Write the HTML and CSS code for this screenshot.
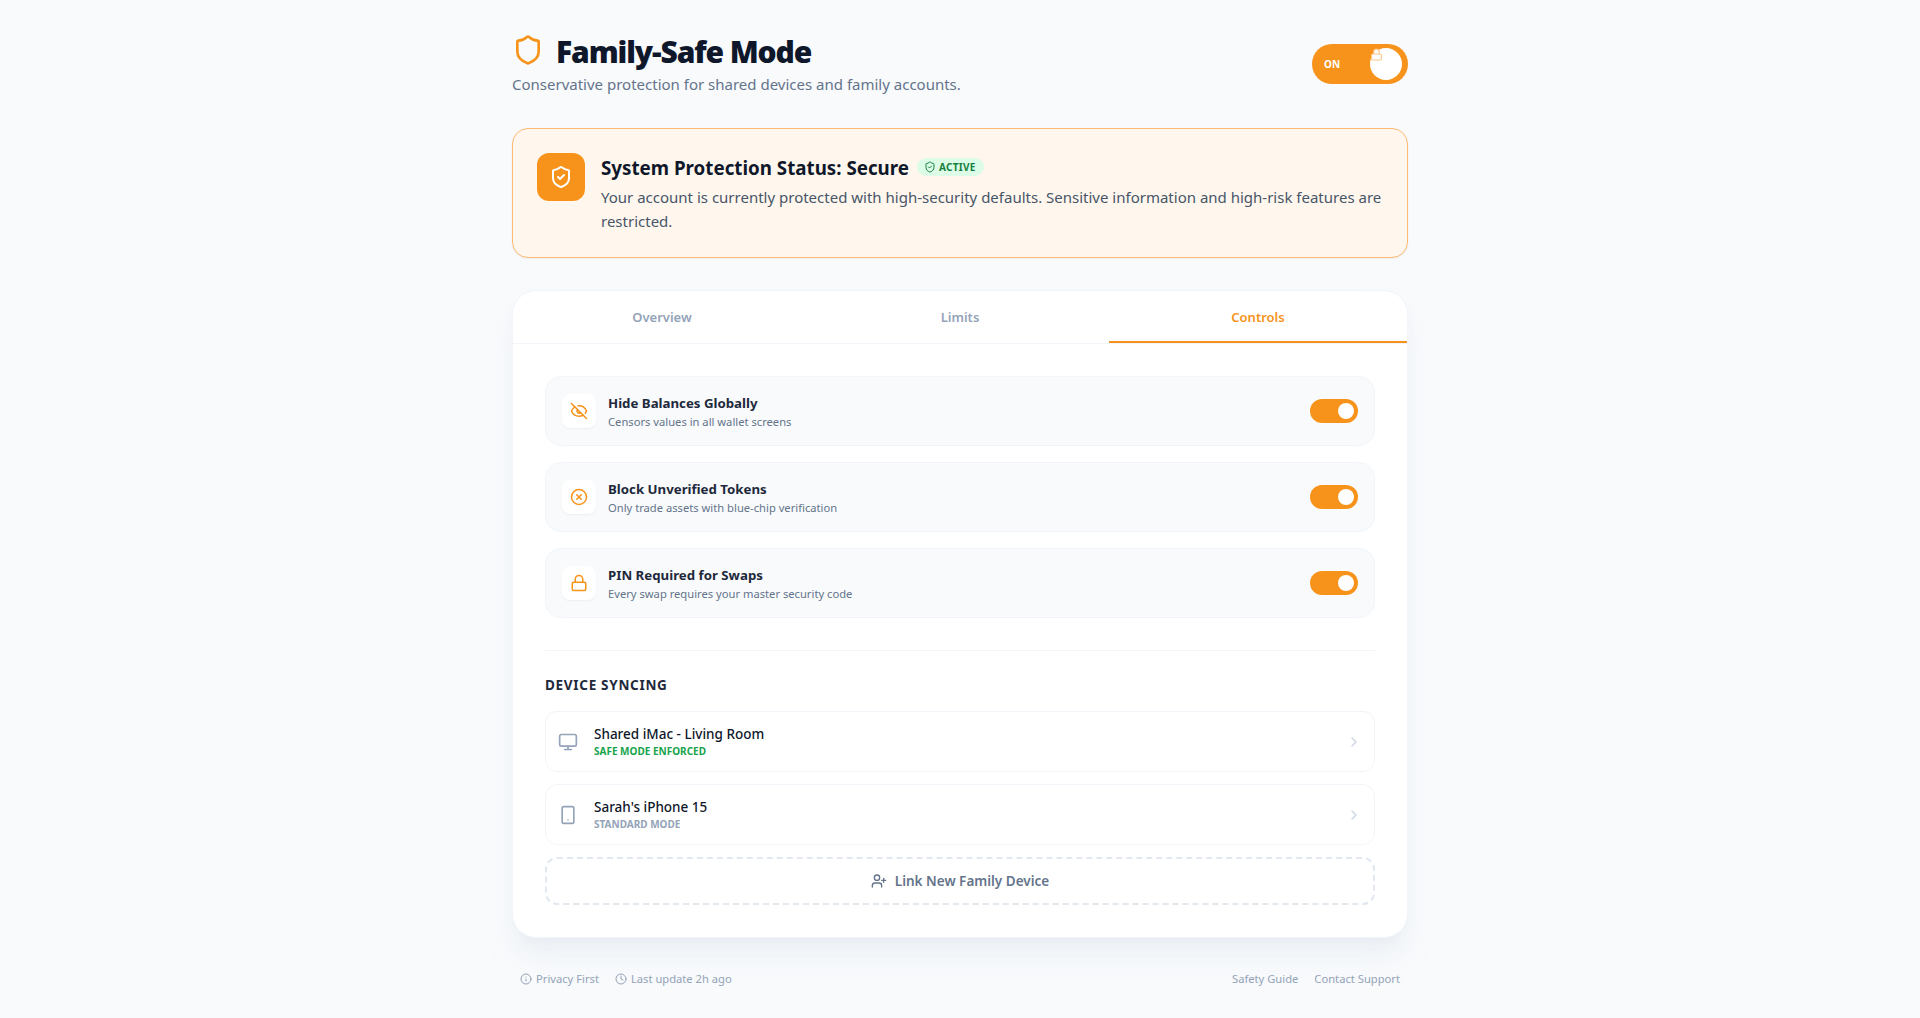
FILE: index.html
```html
<!DOCTYPE html>
<html lang="en">
<head>
    <meta charset="UTF-8">
    <meta name="viewport" content="width=device-width, initial-scale=1.0">
    <title>Family-Safe Mode</title>
    <link rel="stylesheet" href="styles.css">
</head>
<body>
    <div class="page">
        <header class="page-header">
            <div>
                <div class="title-row">
                    <svg class="title-icon" viewBox="0 0 24 24"><path d="M20 13c0 5-3.5 7.5-7.66 8.95a1 1 0 0 1-.67-.01C7.5 20.5 4 18 4 13V6a1 1 0 0 1 1-1c2 0 4.5-1.2 6.24-2.72a1.17 1.17 0 0 1 1.52 0C14.51 3.81 17 5 19 5a1 1 0 0 1 1 1z"/></svg>
                    <h1>Family-Safe Mode</h1>
                </div>
                <p class="subtitle">Conservative protection for shared devices and family accounts.</p>
            </div>
            <div class="master-toggle">
                <span>ON</span>
                <div class="master-knob">
                    <svg class="knob-lock" viewBox="0 0 24 24"><path d="M7 11V7a5 5 0 0 1 10 0v4"/><rect x="3" y="11" width="18" height="11" rx="2"/></svg>
                </div>
            </div>
        </header>

        <section class="status-card">
            <div class="status-icon">
                <svg viewBox="0 0 24 24"><path d="M20 13c0 5-3.5 7.5-7.66 8.95a1 1 0 0 1-.67-.01C7.5 20.5 4 18 4 13V6a1 1 0 0 1 1-1c2 0 4.5-1.2 6.24-2.72a1.17 1.17 0 0 1 1.52 0C14.51 3.81 17 5 19 5a1 1 0 0 1 1 1z"/><path d="m9 12 2 2 4-4"/></svg>
            </div>
            <div>
                <div class="status-head">
                    <h2>System Protection Status: Secure</h2>
                    <span class="badge">
                        <svg viewBox="0 0 24 24"><path d="M20 13c0 5-3.5 7.5-7.66 8.95a1 1 0 0 1-.67-.01C7.5 20.5 4 18 4 13V6a1 1 0 0 1 1-1c2 0 4.5-1.2 6.24-2.72a1.17 1.17 0 0 1 1.52 0C14.51 3.81 17 5 19 5a1 1 0 0 1 1 1z"/><path d="m9 12 2 2 4-4"/></svg>
                        ACTIVE
                    </span>
                </div>
                <p>Your account is currently protected with high-security defaults. Sensitive information and high-risk features are restricted.</p>
            </div>
        </section>

        <section class="panel">
            <nav class="tabs">
                <div class="tab">Overview</div>
                <div class="tab">Limits</div>
                <div class="tab active">Controls</div>
            </nav>

            <div class="panel-body">
                <div class="control-list">
                    <div class="control-row">
                        <div class="control-icon">
                            <svg viewBox="0 0 24 24"><path d="M10.73 5.08A10.4 10.4 0 0 1 12 5c4.5 0 8.3 2.7 10 7a11 11 0 0 1-1.65 2.9"/><path d="M6.6 6.6A11 11 0 0 0 2 12c1.7 4.3 5.5 7 10 7a10.4 10.4 0 0 0 5.4-1.6"/><path d="M9.9 9.9a3 3 0 0 0 4.2 4.2"/><path d="m2 2 20 20"/></svg>
                        </div>
                        <div class="control-text">
                            <h3>Hide Balances Globally</h3>
                            <p>Censors values in all wallet screens</p>
                        </div>
                        <div class="toggle"><div class="knob"></div></div>
                    </div>
                    <div class="control-row">
                        <div class="control-icon">
                            <svg viewBox="0 0 24 24"><circle cx="12" cy="12" r="10"/><path d="m15 9-6 6"/><path d="m9 9 6 6"/></svg>
                        </div>
                        <div class="control-text">
                            <h3>Block Unverified Tokens</h3>
                            <p>Only trade assets with blue-chip verification</p>
                        </div>
                        <div class="toggle"><div class="knob"></div></div>
                    </div>
                    <div class="control-row">
                        <div class="control-icon">
                            <svg viewBox="0 0 24 24"><rect x="3" y="11" width="18" height="11" rx="2"/><path d="M7 11V7a5 5 0 0 1 10 0v4"/></svg>
                        </div>
                        <div class="control-text">
                            <h3>PIN Required for Swaps</h3>
                            <p>Every swap requires your master security code</p>
                        </div>
                        <div class="toggle"><div class="knob"></div></div>
                    </div>
                </div>

                <div class="device-section">
                    <h4>DEVICE SYNCING</h4>
                    <div class="device-list">
                        <div class="device-row">
                            <svg class="device-icon" viewBox="0 0 24 24"><rect x="2" y="3" width="20" height="14" rx="2"/><path d="M8 21h8"/><path d="M12 17v4"/></svg>
                            <div class="device-text">
                                <div class="device-name">Shared iMac - Living Room</div>
                                <div class="device-mode safe">SAFE MODE ENFORCED</div>
                            </div>
                            <svg class="chevron" viewBox="0 0 24 24"><path d="m9 18 6-6-6-6"/></svg>
                        </div>
                        <div class="device-row">
                            <svg class="device-icon" viewBox="0 0 24 24"><rect x="5" y="2" width="14" height="20" rx="2"/><path d="M12 18h.01"/></svg>
                            <div class="device-text">
                                <div class="device-name">Sarah's iPhone 15</div>
                                <div class="device-mode">STANDARD MODE</div>
                            </div>
                            <svg class="chevron" viewBox="0 0 24 24"><path d="m9 18 6-6-6-6"/></svg>
                        </div>
                        <button class="link-device">
                            <svg viewBox="0 0 24 24"><path d="M16 21v-2a4 4 0 0 0-4-4H6a4 4 0 0 0-4 4v2"/><circle cx="9" cy="7" r="4"/><path d="M19 8v6"/><path d="M22 11h-6"/></svg>
                            Link New Family Device
                        </button>
                    </div>
                </div>
            </div>
        </section>

        <footer class="page-footer">
            <div class="footer-group">
                <span class="footer-item">
                    <svg viewBox="0 0 24 24"><circle cx="12" cy="12" r="10"/><path d="M12 16v-4"/><path d="M12 8h.01"/></svg>
                    Privacy First
                </span>
                <span class="footer-item">
                    <svg viewBox="0 0 24 24"><circle cx="12" cy="12" r="10"/><path d="M12 6v6l4 2"/></svg>
                    Last update 2h ago
                </span>
            </div>
            <div class="footer-group">
                <a href="#">Safety Guide</a>
                <a href="#">Contact Support</a>
            </div>
        </footer>
    </div>
</body>
</html>
```

FILE: styles.css
```css
* {
    box-sizing: border-box;
}

body {
    font-family: "Noto Sans", sans-serif;
    background-color: #f8fafc;
    color: #0f172a;
    margin: 0;
    padding: 0;
}

svg {
    fill: none;
    stroke: currentColor;
    stroke-width: 2;
    stroke-linecap: round;
    stroke-linejoin: round;
    flex-shrink: 0;
}

h1, h2, h3, h4, p {
    margin: 0;
}

.page {
    width: 896px;
    margin: 0 auto;
    padding-top: 32px;
}

.page-header {
    display: flex;
    justify-content: space-between;
    align-items: center;
    margin-bottom: 32px;
}

.title-row {
    display: flex;
    align-items: center;
    gap: 12px;
    height: 36px;
}

.title-icon {
    width: 32px;
    height: 32px;
    color: #f7931a;
}

h1 {
    font-size: 30px;
    line-height: 36px;
    font-weight: 900;
    letter-spacing: -1.1px;
    margin-top: 4px;
}

.subtitle {
    font-size: 15px;
    line-height: 24px;
    color: #64748b;
    margin-top: 4px;
}

.master-toggle {
    position: relative;
    width: 96px;
    height: 40px;
    border-radius: 20px;
    background-color: #f7931a;
    color: white;
    font-size: 10px;
    font-weight: 700;
    display: flex;
    align-items: center;
    padding-left: 12px;
}

.master-knob {
    position: absolute;
    top: 4px;
    right: 6px;
    width: 32px;
    height: 32px;
    border-radius: 50%;
    background-color: white;
}

.knob-lock {
    position: absolute;
    top: 0;
    left: 0;
    width: 13px;
    height: 13px;
    color: #fbc88a;
    fill: white;
}

.status-card {
    display: flex;
    gap: 16px;
    padding: 24px;
    background-color: #fff7ed;
    border: 1px solid #fdba74;
    border-radius: 16px;
    box-shadow: 0 1px 2px rgba(0,0,0,0.05);
    margin-bottom: 32px;
}

.status-icon {
    width: 48px;
    height: 48px;
    border-radius: 12px;
    background-color: #f7931a;
    color: white;
    display: flex;
    align-items: center;
    justify-content: center;
    flex-shrink: 0;
}

.status-icon svg {
    width: 24px;
    height: 24px;
}

.status-head {
    display: flex;
    align-items: center;
    gap: 8px;
    margin-bottom: 4px;
}

.status-head h2 {
    font-size: 18.75px;
    line-height: 26px;
    padding-top: 2px;
    font-weight: 700;
}

.badge {
    display: flex;
    align-items: center;
    gap: 3px;
    padding: 2px 8px 2px 7px;
    border-radius: 9px;
    background-color: #dcfce7;
    color: #15803d;
    font-size: 10px;
    font-weight: 700;
    letter-spacing: 0.3px;
}

.badge svg {
    width: 12px;
    height: 12px;
}

.status-card p {
    font-size: 15px;
    line-height: 24px;
    color: #475569;
}

.panel {
    background-color: white;
    border: 1px solid #f1f5f9;
    border-radius: 24px;
    box-shadow: 0 20px 25px -5px rgba(226,232,240,0.5), 0 8px 10px -6px rgba(226,232,240,0.5);
    overflow: hidden;
}

.tabs {
    display: flex;
    border-bottom: 1px solid #f1f5f9;
}

.tab {
    flex: 1;
    text-align: center;
    padding: 17px 0 15px;
    font-size: 13px;
    line-height: 18px;
    font-weight: 600;
    color: #94a3b8;
    border-bottom: 2px solid transparent;
}

.tab.active {
    color: #f7931a;
    border-bottom-color: #f7931a;
}

.panel-body {
    padding: 32px;
}

.control-list {
    display: flex;
    flex-direction: column;
    gap: 16px;
}

.control-row {
    display: flex;
    align-items: center;
    gap: 12px;
    padding: 16px;
    background-color: #f8fafc;
    border: 1px solid #f1f5f9;
    border-radius: 16px;
}

.control-icon {
    width: 34px;
    height: 34px;
    border-radius: 8px;
    background-color: white;
    box-shadow: 0 1px 2px rgba(0,0,0,0.05);
    color: #f7931a;
    display: flex;
    align-items: center;
    justify-content: center;
}

.control-icon svg {
    width: 18px;
    height: 18px;
}

.control-text {
    flex: 1;
}

.control-text h3 {
    font-size: 13.25px;
    line-height: 20px;
    font-weight: 700;
    color: #1e293b;
}

.control-text p {
    font-size: 11.2px;
    line-height: 15px;
    margin-top: 1px;
    color: #64748b;
}

.toggle {
    position: relative;
    width: 48px;
    height: 24px;
    border-radius: 12px;
    background-color: #f7931a;
}

.knob {
    position: absolute;
    top: 4px;
    right: 4px;
    width: 16px;
    height: 16px;
    border-radius: 50%;
    background-color: white;
}

.device-section {
    margin-top: 32px;
    padding-top: 24px;
    border-top: 1px solid #f1f5f9;
}

.device-section h4 {
    font-size: 13.5px;
    line-height: 20px;
    font-weight: 700;
    letter-spacing: 0.7px;
    color: #1e293b;
    margin-bottom: 16px;
}

.device-list {
    display: flex;
    flex-direction: column;
    gap: 12px;
}

.device-row {
    display: flex;
    align-items: center;
    gap: 16px;
    padding: 12px;
    border: 1px solid #f1f5f9;
    border-radius: 12px;
}

.device-icon {
    width: 20px;
    height: 20px;
    color: #94a3b8;
}

.device-text {
    flex: 1;
}

.device-name {
    font-size: 13.5px;
    line-height: 20px;
    font-weight: 500;
}

.device-mode {
    font-size: 10px;
    line-height: 15px;
    font-weight: 700;
    color: #94a3b8;
}

.device-mode.safe {
    color: #16a34a;
}

.chevron {
    width: 16px;
    height: 16px;
    color: #cbd5e1;
}

.link-device {
    display: flex;
    align-items: center;
    justify-content: center;
    gap: 8px;
    height: 48px;
    background: none;
    border: 2px dashed #e2e8f0;
    border-radius: 12px;
    font-family: inherit;
    font-size: 13.5px;
    font-weight: 600;
    color: #64748b;
}

.link-device svg {
    width: 16px;
    height: 16px;
}

.page-footer {
    display: flex;
    justify-content: space-between;
    padding: 33px 8px 0;
    font-size: 11.2px;
    line-height: 16px;
    color: #94a3b8;
}

.footer-group {
    display: flex;
    gap: 16px;
}

.footer-item {
    display: flex;
    align-items: center;
    gap: 4px;
}

.footer-item svg {
    width: 12px;
    height: 12px;
}

.page-footer a {
    color: #94a3b8;
    text-decoration: none;
}
```
